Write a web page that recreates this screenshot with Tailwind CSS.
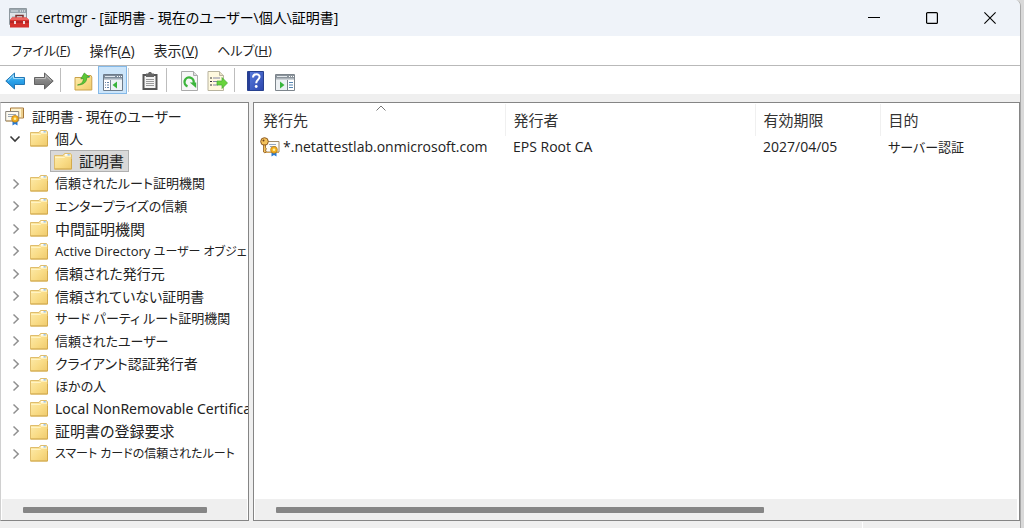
<!DOCTYPE html>
<html lang="ja">
<head>
<meta charset="utf-8">
<meta name="viewport" content="width=device-width, initial-scale=1">
<title>certmgr</title>
<script src="https://cdn.jsdelivr.net/npm/@tailwindcss/browser@4"></script>
</head>
<body class="h-screen overflow-hidden bg-[#d9d9d9] pr-[3px] font-['Open_Sans','Noto_Sans_CJK_JP',sans-serif] text-[14px] text-[#222] [font-feature-settings:'palt']">
<svg class="absolute h-0 w-0" aria-hidden="true">
  <defs>
    <linearGradient id="gold" x1="0" y1="0" x2="1" y2="1"><stop offset="0" stop-color="#fdecae"/><stop offset=".55" stop-color="#f9dc87"/><stop offset="1" stop-color="#efca6c"/></linearGradient>
    <linearGradient id="blue" x1="0" y1="0" x2="0" y2="1"><stop offset="0" stop-color="#6cc8f6"/><stop offset=".5" stop-color="#2ba3ea"/><stop offset="1" stop-color="#1c86d3"/></linearGradient>
    <linearGradient id="gray" x1="0" y1="0" x2="0" y2="1"><stop offset="0" stop-color="#aaa"/><stop offset=".5" stop-color="#858585"/><stop offset="1" stop-color="#6b6b6b"/></linearGradient>
    <linearGradient id="help" x1="0" y1="0" x2="1" y2="1"><stop offset="0" stop-color="#5b7fe0"/><stop offset="1" stop-color="#2c46ad"/></linearGradient>
  </defs>
  <symbol id="folder" viewBox="0 0 18 17">
    <path d="M.5 2.500h8.500l1.500-2h6l1 1.500v14H.5z" fill="url(#gold)" stroke="#dfbd6c"/>
    <path d="M10.500 2.700l.8-1.700h4.700l.7 1.700z" fill="#fff"/><path d="M13.500 1.300h2.300v1.200h-2.300z" fill="#79aeda"/>
    <path d="M1 4.500h9.500l1.200-1.200H17" fill="none" stroke="#fff3c4"/>
    <path d="M.5 16h17V6" fill="none" stroke="#d3aa4d"/>
  </symbol>
  <symbol id="chev" viewBox="0 0 8 12"><path d="M1.500 1.500L6.200 6l-4.700 4.500" fill="none" stroke="#8f8f8f" stroke-width="1.500"/></symbol>
  <symbol id="ribbon" viewBox="0 0 8 11">
    <path d="M1.500 5.500v5L4 9l2.500 1.500v-5z" fill="#2878d0"/><circle cx="4" cy="3.800" r="3.400" fill="#f2b01e" stroke="#b97a12" stroke-width=".7"/><circle cx="4" cy="3.800" r="1.300" fill="#fff0a0"/>
  </symbol>
</svg>

<div class="flex h-full flex-col overflow-hidden rounded-tr-md border-r border-[#a8a8a8] bg-[#efefef]">
  <header class="flex h-9 shrink-0 items-center bg-[#eff3f9]">
    <svg class="ml-[9px] mr-[7px] h-5 w-5 shrink-0" viewBox="0 0 20 20">
      <path d="M.5.500h17v16H.5z" fill="#dfe4e7" stroke="#8e989f"/><path d="M1 1h16v4H1z" fill="#9aa6ae"/><path d="M2 3h7" stroke="#dce5ea"/><path d="M11 3h5" stroke="#fff" stroke-dasharray="1 1"/>
      <path d="M3 8h3v6H3z" fill="#b8c5cb"/><path d="M7 10V7.500h7V10" fill="none" stroke="#76302f" stroke-width="1.500"/>
      <path d="M1 12l2-2.500h14.500l2.500 2.500v7.500H1z" fill="#d5302c"/><path d="M1 12l2-2.500h14.500l2.500 2.500z" fill="#ed6660"/><path d="M1 14h19" stroke="#951d20"/><path d="M5 13h2v3H5zM14 13h2v3h-2z" fill="#f0dada"/>
    </svg>
    <h1 class="grow whitespace-nowrap leading-5 text-black">certmgr - [証明書 - 現在のユーザー\個人\証明書]</h1>
    <button class="flex h-9 w-[58px] items-center justify-center" aria-label="最小化"><svg class="h-3 w-3" viewBox="0 0 12 12"><path d="M0 5.500h12" stroke="#000"/></svg></button>
    <button class="flex h-9 w-[58px] items-center justify-center" aria-label="最大化"><svg class="h-3 w-3" viewBox="0 0 12 12"><rect x=".6" y=".6" width="10.800" height="10.800" rx="1" fill="none" stroke="#000" stroke-width="1.200"/></svg></button>
    <button class="mr-px flex h-9 w-[58px] items-center justify-center" aria-label="閉じる"><svg class="h-3 w-3" viewBox="0 0 12 12"><path d="M.4.400l11.200 11.200M11.600.400L.4 11.600" stroke="#000" stroke-width="1.100"/></svg></button>
  </header>

  <nav class="flex h-[30px] shrink-0 items-center gap-[19px] border-b border-[#b9b9b9] bg-white pl-[11px]">
    <button class="whitespace-nowrap text-[13px]">ファイル(<u>F</u>)</button>
    <button class="whitespace-nowrap">操作(<u>A</u>)</button>
    <button class="whitespace-nowrap">表示(<u>V</u>)</button>
    <button class="whitespace-nowrap text-[13px]">ヘルプ(<u>H</u>)</button>
  </nav>

  <div role="toolbar" class="flex h-7 shrink-0 items-center bg-white pl-[5px]">
    <button class="pt-0.5" aria-label="戻る"><svg class="h-[18px] w-5" viewBox="0 0 20 18"><path d="M.8 9L9.500 1v4.500h10v7h-10V17z" fill="url(#blue)" stroke="#2277b5"/><path d="M3 8.500L8.500 3.300v3.200h10" fill="none" stroke="#a4dcf9"/></svg></button>
    <button class="ml-[9px] pt-0.5" aria-label="進む"><svg class="h-[18px] w-5" viewBox="0 0 20 18"><path d="M19.200 9L10.500 1v4.500H.5v7h10V17z" fill="url(#gray)" stroke="#636363"/><path d="M1.500 6.500h10V3.300L17 8.500" fill="none" stroke="#bdbdbd"/></svg></button>
    <span class="ml-1.5 h-6 w-px bg-[#bdbdbd]"></span>
    <button class="ml-[13px] pt-0.5" aria-label="1 つ上のレベル"><svg class="h-[19px] w-[19px]" viewBox="0 0 19 19"><path d="M1 5.500h9l1.500-2H17l.8 1.500v13H1z" fill="url(#gold)" stroke="#caa24b"/><path d="M13 4.500h3" stroke="#4b98d0"/><path d="M3.500 13C8 12 9.500 9.500 9.300 6.300L6.800 7l3.500-6 5 4.200-2.600.3C13 10 9.500 13 3.500 13z" fill="#5cc934" stroke="#38972a" stroke-width=".7"/></svg></button>
    <button class="ml-[5px] flex h-7 w-[29px] items-center justify-center border border-[#84b9e8] bg-[#cce5fa]" aria-label="コンソール ツリーの表示" aria-pressed="true">
      <svg class="mt-1 h-[17px] w-5" viewBox="0 0 20 17"><path d="M.5.500h19v16H.5z" fill="#fff" stroke="#6d7b8a"/><path d="M1 1h18v4.500H1z" fill="#7d8b9a"/><path d="M2 2.500h10" stroke="#dfe7ee"/><path d="M14 2.500h5" stroke="#fff" stroke-dasharray="1 1"/><path d="M1 5h18" stroke="#cbd4dd"/><path d="M7.500 6v10" stroke="#7d8b9a"/><path d="M2 8.500h4M2 11h4M2 13.500h4" stroke="#6583a5" stroke-dasharray="1 1 2"/><path d="M8 6h11v10H8z" fill="#eef3f7"/><path d="M14 7.500v7L9.500 11z" fill="#39b53c"/></svg>
    </button>
    <span class="ml-px h-6 w-px bg-[#cfcfcf]"></span>
    <button class="ml-[13px] pt-0.5" aria-label="貼り付け"><svg class="h-[18px] w-4" viewBox="0 0 16 18"><path d="M1.500 3h13v14h-13z" fill="#f3f3f3" stroke="#555" stroke-width="2"/><path d="M4 1.500h2L7 0h2l1 1.500h2V5H4z" fill="#666"/><path d="M4 7.500h8M4 9.500h8M4 11.500h8M4 13.500h8" stroke="#999"/></svg></button>
    <span class="ml-2 h-6 w-px bg-[#bdbdbd]"></span>
    <button class="ml-3.5 pt-0.5" aria-label="最新の情報に更新"><svg class="h-5 w-[17px]" viewBox="0 0 17 20"><path d="M.5.500h12l4 4v15H.5z" fill="#f7f7f7" stroke="#aaa"/><path d="M12.500.500v4h4" fill="#ddd" stroke="#aaa"/><path d="M6.500 15.300A4.600 4.600 0 1 1 12.600 12" fill="none" stroke="#3cb53b" stroke-width="2.400"/><path d="M8.800 11.500h6.400v5.500z" fill="#3cb53b"/></svg></button>
    <button class="ml-[9px] pt-0.5" aria-label="一覧のエクスポート"><svg class="h-5 w-[21px]" viewBox="0 0 21 20"><path d="M1 .500h11.500l4 4v15H1z" fill="#fff9df" stroke="#b8b39e"/><path d="M12.500.500v4h4" fill="#e8e2c7" stroke="#b8b39e"/><path d="M3 7h2M3 10.500h2M3 14h2" stroke="#333"/><path d="M6 7h7M6 10.500h5M6 14h5" stroke="#8585a5"/><path d="M10 10h5V6.500l5.500 5.500-5.500 5.500V14h-5z" fill="#68d43c" stroke="#44aa35" stroke-width=".7"/></svg></button>
    <span class="ml-1.5 h-6 w-px bg-[#bdbdbd]"></span>
    <button class="ml-3 pt-0.5" aria-label="ヘルプ"><svg class="h-5 w-[17px]" viewBox="0 0 17 20"><path d="M.5.500h16v19H.5z" fill="url(#help)" stroke="#27418f"/><path d="M2 1v18" stroke="#263e99" stroke-width="2"/><path d="M6 6.500c0-4.300 7-4.100 6.500-.3-.3 2.700-3.300 2.500-3.300 6" fill="none" stroke="#fff" stroke-width="2"/><circle cx="9.200" cy="15.500" r="1.400" fill="#fff"/></svg></button>
    <button class="ml-[11px] pt-0.5" aria-label="操作ウィンドウの表示"><svg class="mt-0.5 h-[17px] w-5" viewBox="0 0 20 17"><path d="M.5.500h19v16H.5z" fill="#fff" stroke="#7d858c"/><path d="M1 1h18v4.500H1z" fill="#8b949c"/><path d="M2 2.500h10" stroke="#e5eaee"/><path d="M14 2.500h5" stroke="#fff" stroke-dasharray="1 1"/><path d="M1 5h18" stroke="#d3d9de"/><path d="M1 6h11v10H1z" fill="#edf1f4"/><path d="M12.500 6v10" stroke="#7d858c"/><path d="M14 8.500h4M14 11h4M14 13.500h4" stroke="#5685b2"/><path d="M5 7.500v7L9.500 11z" fill="#39b53c"/></svg></button>
  </div>

  <main class="mt-2 flex min-h-0 grow gap-1">
    <section class="flex w-[249px] shrink-0 flex-col border border-[#858585] border-l-[#d0d0d0] bg-white pt-0.5">
      <ul role="tree" class="grid h-[360px] shrink-0 auto-rows-fr overflow-hidden whitespace-nowrap text-[13px]">
        <li role="treeitem" class="flex items-center pl-1">
          <svg class="mr-2 h-[19px] w-[19px] shrink-0" viewBox="0 0 19 19"><path d="M5.500 1h13v10h-13z" fill="#fff4cf" stroke="#a87838"/><path d="M17 2v8" stroke="#d8a94d"/><path d="M.7 4.500h13v9.500H.7z" fill="#fdfaf0" stroke="#8a857c"/><path d="M3 7.500h8M3 9.500h5" stroke="#9ba7b5"/><path d="M1 14h12" stroke="#c4a066"/><svg x="6" y="8" width="8" height="11"><use href="#ribbon"/></svg></svg>
          <span class="text-[14px]">証明書 - 現在のユーザー</span>
        </li>
        <li role="treeitem" aria-expanded="true" class="flex items-center pl-2">
          <svg class="mr-[9px] h-2 w-3 shrink-0" viewBox="0 0 12 8"><path d="M1.500 1.500L6 6l4.500-4.500" fill="none" stroke="#3a3a3a" stroke-width="1.600"/></svg>
          <svg class="mr-[7px] h-[17px] w-[18px] shrink-0"><use href="#folder"/></svg><span class="text-[14px]">個人</span>
        </li>
        <li role="treeitem" aria-selected="true" class="flex items-center pl-[49px]">
          <span class="flex h-[22px] items-center border border-[#b0b0b0] bg-[#d9d9d9] pl-[3px] pr-1"><svg class="mr-[7px] h-[17px] w-[18px] shrink-0"><use href="#folder"/></svg><span class="text-[15px]">証明書</span></span>
        </li>
        <li role="treeitem" class="flex items-center pl-[11px]"><svg class="mr-[10px] h-3 w-2 shrink-0"><use href="#chev"/></svg><svg class="mr-[7px] h-[17px] w-[18px] shrink-0"><use href="#folder"/></svg><span>信頼されたルート証明機関</span></li>
        <li role="treeitem" class="flex items-center pl-[11px]"><svg class="mr-[10px] h-3 w-2 shrink-0"><use href="#chev"/></svg><svg class="mr-[7px] h-[17px] w-[18px] shrink-0"><use href="#folder"/></svg><span>エンタープライズの信頼</span></li>
        <li role="treeitem" class="flex items-center pl-[11px]"><svg class="mr-[10px] h-3 w-2 shrink-0"><use href="#chev"/></svg><svg class="mr-[7px] h-[17px] w-[18px] shrink-0"><use href="#folder"/></svg><span class="text-[15px]">中間証明機関</span></li>
        <li role="treeitem" class="flex items-center pl-[11px]"><svg class="mr-[10px] h-3 w-2 shrink-0"><use href="#chev"/></svg><svg class="mr-[7px] h-[17px] w-[18px] shrink-0"><use href="#folder"/></svg><span>Active Directory <span class="text-[12px]">ユーザー オブジェ</span></span></li>
        <li role="treeitem" class="flex items-center pl-[11px]"><svg class="mr-[10px] h-3 w-2 shrink-0"><use href="#chev"/></svg><svg class="mr-[7px] h-[17px] w-[18px] shrink-0"><use href="#folder"/></svg><span class="text-[14px]">信頼された発行元</span></li>
        <li role="treeitem" class="flex items-center pl-[11px]"><svg class="mr-[10px] h-3 w-2 shrink-0"><use href="#chev"/></svg><svg class="mr-[7px] h-[17px] w-[18px] shrink-0"><use href="#folder"/></svg><span class="text-[14px]">信頼されていない証明書</span></li>
        <li role="treeitem" class="flex items-center pl-[11px]"><svg class="mr-[10px] h-3 w-2 shrink-0"><use href="#chev"/></svg><svg class="mr-[7px] h-[17px] w-[18px] shrink-0"><use href="#folder"/></svg><span>サード パーティ ルート証明機関</span></li>
        <li role="treeitem" class="flex items-center pl-[11px]"><svg class="mr-[10px] h-3 w-2 shrink-0"><use href="#chev"/></svg><svg class="mr-[7px] h-[17px] w-[18px] shrink-0"><use href="#folder"/></svg><span>信頼されたユーザー</span></li>
        <li role="treeitem" class="flex items-center pl-[11px]"><svg class="mr-[10px] h-3 w-2 shrink-0"><use href="#chev"/></svg><svg class="mr-[7px] h-[17px] w-[18px] shrink-0"><use href="#folder"/></svg><span class="text-[14px]">クライアント認証発行者</span></li>
        <li role="treeitem" class="flex items-center pl-[11px]"><svg class="mr-[10px] h-3 w-2 shrink-0"><use href="#chev"/></svg><svg class="mr-[7px] h-[17px] w-[18px] shrink-0"><use href="#folder"/></svg><span>ほかの人</span></li>
        <li role="treeitem" class="flex items-center pl-[11px]"><svg class="mr-[10px] h-3 w-2 shrink-0"><use href="#chev"/></svg><svg class="mr-[7px] h-[17px] w-[18px] shrink-0"><use href="#folder"/></svg><span class="font-['Noto_Sans'] text-[14px]">Local NonRemovable Certifica</span></li>
        <li role="treeitem" class="flex items-center pl-[11px]"><svg class="mr-[10px] h-3 w-2 shrink-0"><use href="#chev"/></svg><svg class="mr-[7px] h-[17px] w-[18px] shrink-0"><use href="#folder"/></svg><span class="text-[15px]">証明書の登録要求</span></li>
        <li role="treeitem" class="flex items-center pl-[11px]"><svg class="mr-[10px] h-3 w-2 shrink-0"><use href="#chev"/></svg><svg class="mr-[7px] h-[17px] w-[18px] shrink-0"><use href="#folder"/></svg><span class="text-[12px]">スマート カードの信頼されたルート</span></li>
      </ul>
      <div class="mx-px mt-auto flex h-[21px] items-center bg-[#efefef] pl-[21px]"><div class="h-1.5 w-[184px] rounded-[1px] bg-[#868686]"></div></div>
    </section>

    <section class="flex min-w-0 grow flex-col border border-[#858585] bg-white pl-px pt-px">
      <table class="w-full table-fixed border-collapse whitespace-nowrap text-left">
        <colgroup><col class="w-[250px]"><col class="w-[250px]"><col class="w-[125px]"><col></colgroup>
        <thead>
          <tr class="h-8 text-[15px] text-[#333]">
            <th scope="col" class="relative border-r border-[#f0f0f0] p-0 pl-2 font-normal">発行先<svg class="absolute left-[121px] top-px h-1.5 w-2.5" viewBox="0 0 10 6"><path d="M.5 5.500L5 1l4.500 4.500" fill="none" stroke="#777"/></svg></th>
            <th scope="col" class="border-r border-[#f0f0f0] p-0 pl-2 font-normal">発行者</th>
            <th scope="col" class="border-r border-[#f0f0f0] p-0 pl-2 font-normal">有効期限</th>
            <th scope="col" class="p-0 pl-2 font-normal">目的</th>
          </tr>
        </thead>
        <tbody>
          <tr class="h-[22px] leading-[22px]">
            <td class="p-0 pl-[5px]"><div class="flex h-[22px] items-center"><svg class="mr-[3px] h-5 w-5 shrink-0" viewBox="0 0 20 20"><path d="M5 4.500h14v10.500H5z" fill="#fdfcf7" stroke="#a08b6b"/><path d="M9 7.500h7M10 9.500h6" stroke="#94a8c4"/><path d="M5 15.500h14" stroke="#d1a45a"/><svg x="10" y="9" width="8" height="11"><use href="#ribbon"/></svg><circle cx="4.500" cy="4.500" r="3.800" fill="#f3c25c" stroke="#8e5a22"/><circle cx="3.500" cy="3.500" r="1" fill="#704018"/><path d="M3.500 8v7l1.500 1 1.200-1.200L5.500 13l1-1-1-1.500V8z" fill="#f3c25c" stroke="#8e5a22" stroke-width=".8"/></svg><span>*.netattestlab.onmicrosoft.com</span></div></td>
            <td class="p-0 pl-2">EPS Root CA</td>
            <td class="p-0 pl-2">2027/04/05</td>
            <td class="p-0 pl-2 text-[13px]">サーバー認証</td>
          </tr>
        </tbody>
      </table>
      <div class="mr-0.5 mt-auto flex h-[21px] items-center bg-[#efefef] pl-[21px]"><div class="h-1.5 w-[488px] rounded-[1px] bg-[#868686]"></div></div>
    </section>
  </main>
  <footer class="mt-px flex h-[6px] shrink-0 justify-end"><span class="mr-[157px] w-px bg-white"></span></footer>
</div>
</body>
</html>
